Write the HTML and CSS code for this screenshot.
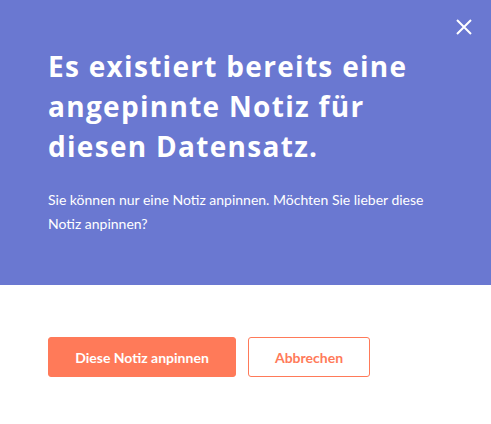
FILE: index.html
```html
<!DOCTYPE html>
<html>

<head>
    <title>Angepinnte Notiz</title>
    <link rel="stylesheet" href="styles.css">
</head>

<body>
    <div class="dialog">
        <div class="dialog-header">
            <button class="close" type="button" aria-label="Schließen">
                <svg width="16" height="16" viewBox="0 0 16 16">
                    <path d="M1 1 L15 15 M15 1 L1 15" stroke="#fff" stroke-width="2" fill="none" />
                </svg>
            </button>
            <h2 class="title">Es existiert bereits eine angepinnte Notiz für diesen Datensatz.</h2>
            <p class="text">Sie können nur eine Notiz anpinnen. Möchten Sie lieber diese Notiz anpinnen?</p>
        </div>
        <div class="dialog-footer">
            <button class="btn btn-primary" type="button">Diese Notiz anpinnen</button>
            <button class="btn btn-secondary" type="button">Abbrechen</button>
        </div>
    </div>
</body>

</html>
```
FILE: styles.css
```css
body {
    margin: 0;
    font-family: Lato, "Open Sans", sans-serif;
    background-color: #fff;
}

.dialog {
    width: 491px;
    height: 424px;
}

.dialog-header {
    position: relative;
    box-sizing: border-box;
    height: 285px;
    padding: 46px 48px 0 48px;
    background-color: #6a78d1;
    color: #fff;
}

.close {
    position: absolute;
    top: 19px;
    right: 19px;
    padding: 0;
    border: none;
    background: none;
    cursor: pointer;
    line-height: 0;
}

.title {
    margin: 0;
    font-family: "Open Sans", sans-serif;
    font-size: 28px;
    font-weight: 700;
    line-height: 40px;
    letter-spacing: 1.3px;
}

.text {
    margin: 22px 0 0 0;
    font-size: 14px;
    line-height: 24px;
}

.dialog-footer {
    display: flex;
    gap: 12px;
    padding: 52px 48px 0 48px;
}

.btn {
    box-sizing: border-box;
    height: 40px;
    border-radius: 3px;
    font-family: Lato, "Open Sans", sans-serif;
    font-size: 14px;
    font-weight: 700;
    cursor: pointer;
}

.btn-primary {
    width: 188px;
    border: 1px solid #ff7a59;
    background-color: #ff7a59;
    color: #fff;
}

.btn-secondary {
    width: 122px;
    border: 1px solid #ff7a59;
    background-color: #fff;
    color: #ff7a59;
}
```
